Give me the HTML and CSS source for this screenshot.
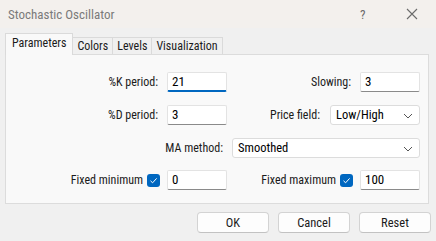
FILE: index.html
```html
<!DOCTYPE html>
<html lang="en">
<head>
    <meta charset="UTF-8">
    <title>Stochastic Oscillator</title>
    <link rel="stylesheet" href="styles.css">
</head>
<body>
<div class="window">
    <!-- Title bar -->
    <div class="titlebar">
        <span class="title">Stochastic Oscillator</span>
        <span class="help">?</span>
        <span class="close">
            <svg width="12" height="12" viewBox="0 0 12 12"><path d="M1 1 L11 11 M11 1 L1 11" stroke="#6b6b6b" stroke-width="1.1" fill="none"/></svg>
        </span>
    </div>

    <div class="content">
        <div class="tabs">
            <div class="tab active">Parameters</div>
            <div class="tab">Colors</div>
            <div class="tab">Levels</div>
            <div class="tab">Visualization</div>
        </div>

        <div class="panel">
            <div class="row">
                <div class="left">
                    <label>%K period:</label>
                    <div class="field focused">21</div>
                </div>
                <div class="right">
                    <label>Slowing:</label>
                    <div class="field">3</div>
                </div>
            </div>

            <div class="row">
                <div class="left">
                    <label>%D period:</label>
                    <div class="field">3</div>
                </div>
                <div class="right">
                    <label class="wide-gap">Price field:</label>
                    <div class="select price">Low/High
                        <svg class="chev" width="10" height="6" viewBox="0 0 10 6"><path d="M1 1 L5 5 L9 1" stroke="#555" stroke-width="1" fill="none"/></svg>
                    </div>
                </div>
            </div>

            <div class="row single">
                <label>MA method:</label>
                <div class="select method">Smoothed
                    <svg class="chev" width="10" height="6" viewBox="0 0 10 6"><path d="M1 1 L5 5 L9 1" stroke="#555" stroke-width="1" fill="none"/></svg>
                </div>
            </div>

            <div class="row">
                <div class="left">
                    <label class="check-label">Fixed minimum</label>
                    <span class="check">
                        <svg width="13" height="13" viewBox="0 0 13 13"><rect x="0" y="0" width="13" height="13" rx="3" fill="#0067c0"/><path d="M3.5 6.8 L5.6 8.8 L9.6 4.4" stroke="#fff" stroke-width="1" fill="none"/></svg>
                    </span>
                    <div class="field">0</div>
                </div>
                <div class="right">
                    <label class="check-label">Fixed maximum</label>
                    <span class="check">
                        <svg width="13" height="13" viewBox="0 0 13 13"><rect x="0" y="0" width="13" height="13" rx="3" fill="#0067c0"/><path d="M3.5 6.8 L5.6 8.8 L9.6 4.4" stroke="#fff" stroke-width="1" fill="none"/></svg>
                    </span>
                    <div class="field">100</div>
                </div>
            </div>
        </div>

        <div class="buttons">
            <button>OK</button>
            <button>Cancel</button>
            <button>Reset</button>
        </div>
    </div>
</div>
</body>
</html>
```

FILE: styles.css
```css
body {
    margin: 0;
    padding: 0;
    background-color: #f0f0f0;
    font-family: Roboto, "Liberation Sans", sans-serif;
    font-stretch: 75%;
    font-size: 12px;
    color: #1b1b1b;
}
.window {
    width: 436px;
    height: 241px;
    overflow: hidden;
}

/* Title bar */
.titlebar {
    height: 28px;
    background-color: #f3f0ed;
    display: flex;
    align-items: center;
    padding-left: 8px;
}
.title {
    flex: 1;
    color: #7a7a7a;
    font-size: 13px;
}
.help {
    color: #6b6b6b;
    width: 46px;
    font-size: 13px;
}
.close {
    width: 30px;
    display: flex;
    align-items: center;
}

/* Tabs */
.content {
    padding: 6px 7px 0 5px;
}
.tabs {
    display: flex;
    align-items: flex-end;
    height: 20px;
}
.tab {
    height: 16px;
    line-height: 16px;
    padding: 0 4px;
    border: 1px solid #dadada;
    border-bottom: none;
    border-left: none;
    background-color: #f0f0f0;
}
.tab.active {
    height: 21px;
    line-height: 19px;
    padding: 0 6px;
    border-left: 1px solid #dadada;
    background-color: #f9f9f9;
    position: relative;
    z-index: 1;
    margin-bottom: -1px;
}

/* Panel */
.panel {
    height: 131px;
    border: 1px solid #dcdcdc;
    background-color: #f9f9f9;
    padding: 17px 8px 0 0;
}
.row {
    display: flex;
    height: 20px;
    margin-bottom: 13px;
}
.row.single {
    justify-content: flex-end;
    align-items: center;
    margin-bottom: 12px;
}
.left {
    width: 221px;
    display: flex;
    justify-content: flex-end;
    align-items: center;
}
.right {
    flex: 1;
    display: flex;
    justify-content: flex-end;
    align-items: center;
}
label {
    margin-right: 9px;
}
label.wide-gap {
    margin-right: 10px;
}
label.check-label {
    margin-right: 4px;
}
.check {
    width: 13px;
    height: 13px;
    margin-right: 7px;
    display: flex;
}

/* Inputs */
.field {
    box-sizing: border-box;
    width: 60px;
    height: 20px;
    line-height: 18px;
    padding-left: 4px;
    background-color: #ffffff;
    border: 1px solid #e3e3e3;
    border-bottom-color: #8a8a8a;
    border-radius: 2px;
    font-size: 13px;
    color: #000;
}
.field.focused {
    border-bottom: 2px solid #0067c0;
}
.select {
    box-sizing: border-box;
    height: 20px;
    line-height: 18px;
    padding-left: 5px;
    background-color: #ffffff;
    border: 1px solid #dcdcdc;
    border-radius: 3px;
    position: relative;
    font-size: 12.5px;
    color: #000;
}
.select.price {
    width: 90px;
}
.select.method {
    width: 188px;
}
.chev {
    position: absolute;
    right: 6px;
    top: 7px;
}

/* Bottom buttons */
.buttons {
    display: flex;
    justify-content: flex-end;
    gap: 9px;
    margin-top: 8px;
    margin-right: -2px;
}
button {
    width: 72px;
    height: 21px;
    background-color: #fdfdfd;
    border: 1px solid #d3d3d3;
    border-bottom-color: #c2c2c2;
    border-radius: 4px;
    font-family: Roboto, "Liberation Sans", sans-serif;
    font-stretch: 75%;
    font-size: 12.5px;
    color: #1b1b1b;
    padding: 0;
}
```
